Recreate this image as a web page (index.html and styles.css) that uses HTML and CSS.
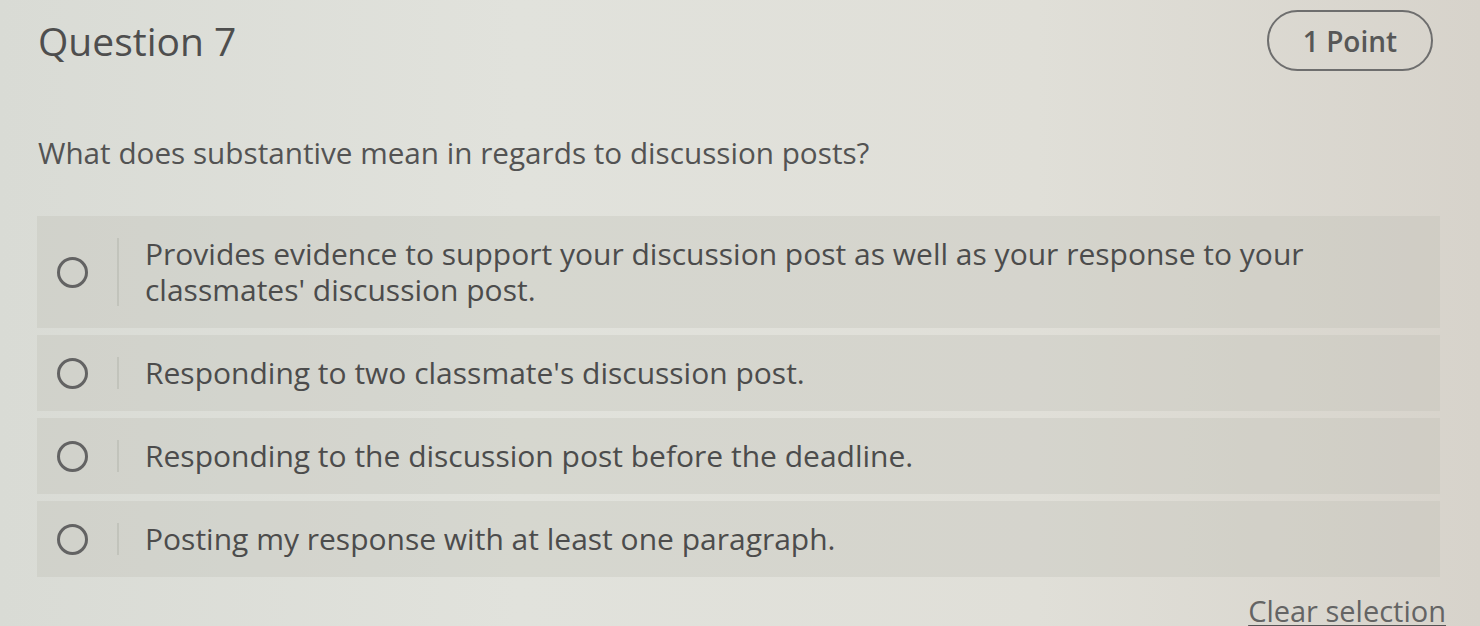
FILE: index.html
```html
<!DOCTYPE html>
<html lang="en">
<head>
<meta charset="utf-8">
<title>Question 7</title>
<link rel="stylesheet" href="styles.css">
</head>
<body>
<main class="question">
  <header class="q-head">
    <h1 class="q-title">Question 7</h1>
    <span class="q-points">1 Point</span>
  </header>
  <p class="q-text">What does substantive mean in regards to discussion posts?</p>
  <ul class="options">
    <li class="option">
      <span class="radio-cell"><span class="radio"></span></span>
      <span class="opt-text">Provides evidence to support your discussion post as well as your response to your classmates' discussion post.</span>
    </li>
    <li class="option">
      <span class="radio-cell"><span class="radio"></span></span>
      <span class="opt-text">Responding to two classmate's discussion post.</span>
    </li>
    <li class="option">
      <span class="radio-cell"><span class="radio"></span></span>
      <span class="opt-text">Responding to the discussion post before the deadline.</span>
    </li>
    <li class="option">
      <span class="radio-cell"><span class="radio"></span></span>
      <span class="opt-text">Posting my response with at least one paragraph.</span>
    </li>
  </ul>
  <div class="clear-row"><a class="clear" href="#">Clear selection</a></div>
</main>
</body>
</html>
```
FILE: styles.css
```css
html, body {
  margin: 0;
  padding: 0;
}
body {
  width: 1480px;
  height: 626px;
  overflow: hidden;
  background: linear-gradient(90deg, #d9dbd5 0%, #e1e2dc 35%, #e0dfd8 70%, #d7d3cb 100%);
  font-family: "Open Sans", "Noto Sans", sans-serif;
  color: #525252;
}
.question {
  padding: 10px 40px 0 37px;
}
.q-head {
  display: flex;
  justify-content: space-between;
  align-items: center;
  padding-right: 7px;
}
.q-title {
  margin: 0;
  font-size: 39px;
  font-weight: 400;
  line-height: 61px;
  color: #4e4e4e;
  padding-left: 1px;
}
.q-points {
  box-sizing: border-box;
  height: 61px;
  width: 166px;
  border: 2px solid #6e6e6e;
  border-radius: 31px;
  display: flex;
  align-items: center;
  justify-content: center;
  font-size: 28px;
  font-weight: 600;
  color: #575757;
}
.q-text {
  margin: 62px 0 0 1px;
  font-size: 29.7px;
  line-height: 40px;
  color: #535353;
}
.options {
  list-style: none;
  margin: 43px 0 0 0;
  padding: 0;
  display: flex;
  flex-direction: column;
  gap: 7px;
}
.option {
  display: flex;
  align-items: center;
  background: rgba(188, 190, 180, 0.3);
  padding: 20px 24px 20px 0;
}
.radio-cell {
  flex: 0 0 82px;
  align-self: stretch;
  display: flex;
  align-items: center;
  justify-content: flex-start;
  padding-left: 20px;
  box-sizing: border-box;
  border-right: 2px solid rgba(175, 177, 169, 0.45);
  margin: 2px 0;
}
.radio {
  box-sizing: border-box;
  width: 31px;
  height: 31px;
  border: 3px solid #636363;
  border-radius: 50%;
}
.opt-text {
  padding-left: 26px;
  font-size: 30px;
  line-height: 36px;
  color: #4c4c4c;
}
.clear-row {
  display: flex;
  justify-content: flex-end;
  margin-top: 14px;
  margin-right: -6px;
}
.clear {
  font-size: 29px;
  line-height: 40px;
  color: #646464;
  text-decoration: underline;
  text-decoration-color: #555;
  text-underline-offset: 3px;
}
```
